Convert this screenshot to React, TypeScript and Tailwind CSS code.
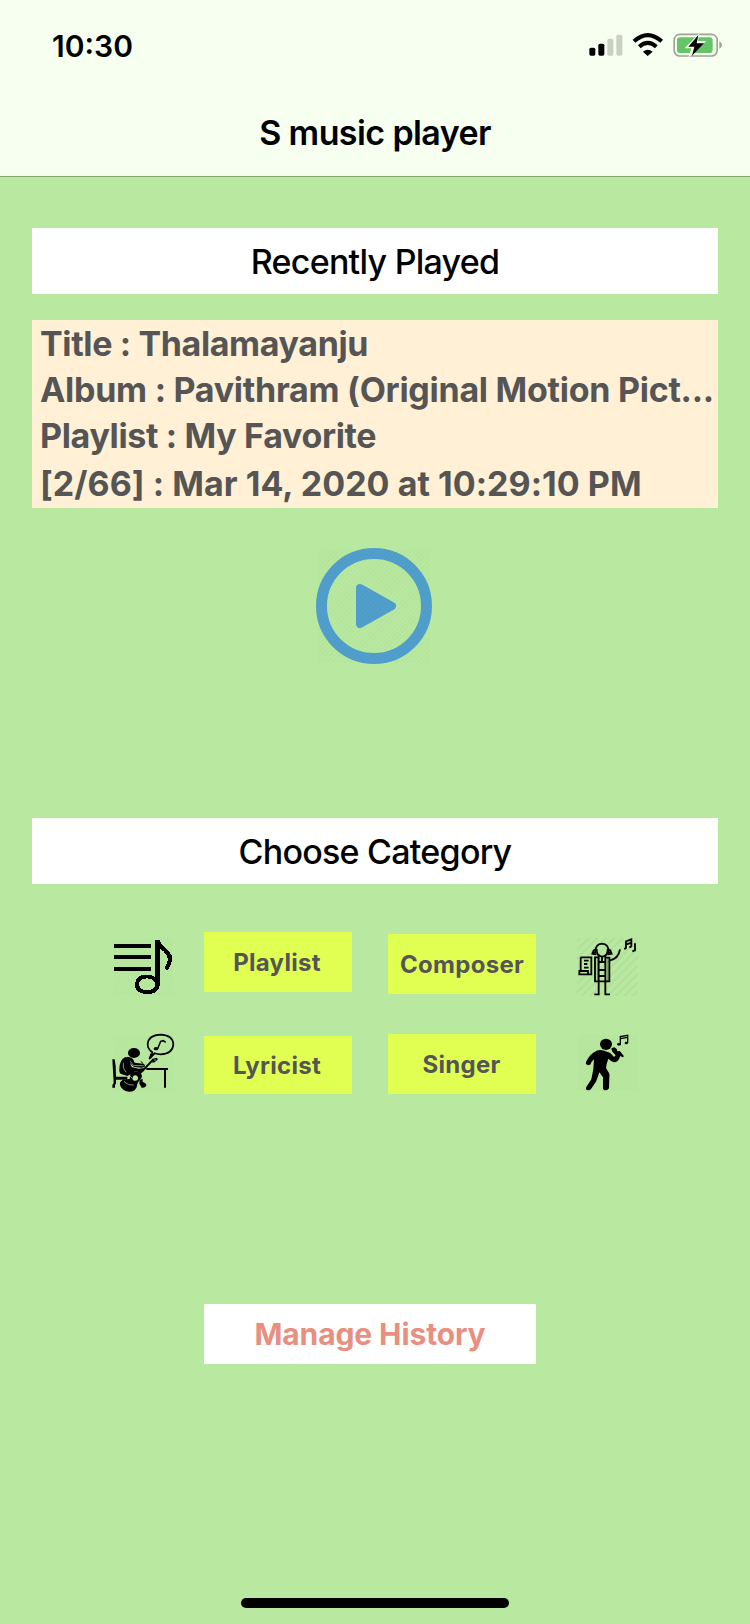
import type { ReactNode } from "react";

function Hatch({ id, size, x, y, w, h, opacity = 0.06 }: { id: string; size: number; x: number; y: number; w: number; h: number; opacity?: number }) {
  return (
    <>
      <defs>
        <pattern id={id} width={size} height={size} patternUnits="userSpaceOnUse" patternTransform="rotate(45)">
          <rect width={size * 0.35} height={size} fill="#000" />
        </pattern>
      </defs>
      <rect x={x} y={y} width={w} height={h} fill={`url(#${id})`} opacity={opacity} />
    </>
  );
}

function StatusIcons() {
  return (
    <svg width="134" height="24" viewBox="0 0 402 72" className="block">
      <rect x="1" y="44" width="18" height="24" rx="5" />
      <rect x="28" y="32" width="18" height="36" rx="5" />
      <rect x="55" y="17" width="18" height="51" rx="5" fill="#c9d1c1" />
      <rect x="82" y="5" width="18" height="63" rx="5" fill="#c9d1c1" />
      <path d="M135 25Q176 -12 218 25" fill="none" stroke="#000" strokeWidth="12" />
      <path d="M151 41Q176 18 202 41" fill="none" stroke="#000" strokeWidth="12" />
      <path d="M162 56Q176 44 191 56L176 69Z" />
      <rect x="255.500" y="4" width="129" height="65" rx="17" fill="none" stroke="#9da597" strokeWidth="5" />
      <path d="M391 25Q399 29 399 36T391 48Z" fill="#9da597" />
      <rect x="264" y="13" width="107" height="47" rx="10" fill="#65c466" />
      <path d="M331 0L287 46H307L298 74L352 24H327Z" fill="#f7fff0" />
      <path d="M328 6L298 41H316L309 68L345 31H323Z" />
    </svg>
  );
}

function PlayIcon() {
  return (
    <svg width="118" height="118" viewBox="0 0 118 118" className="block">
      <circle cx="59" cy="59" r="52.500" fill="none" stroke="#519fcd" strokeWidth="11" />
      <path d="M44 41L76 59L44 77Z" fill="#519fcd" stroke="#519fcd" strokeWidth="8" strokeLinejoin="round" transform="translate(1 0)" />
      <Hatch id="hatch-play" size={3.2} x={3} y={2} w={112} h={114} opacity={0.03} />
    </svg>
  );
}

function PlaylistIcon() {
  return (
    <svg width="62" height="60" viewBox="36 39 186 180" className="block" shapeRendering="crispEdges">
      <Hatch id="hatch-playlist" size={8} x={39} y={41} w={181} h={170} opacity={0.03} />
      <path d="M42 63H153M42 96H153M42 132H153" stroke="#000" strokeWidth="12" />
      <path d="M165 45H179Q184 60 203 75Q219 90 216 106Q213 124 201 137L193 129Q204 115 203 101Q202 86 179 70V178Q178 207 141 207Q105 206 105 178Q106 150 140 149Q155 149 165 156ZM141 160Q118 161 117 178Q118 195 141 196Q165 195 165 178Q164 161 141 160Z" fillRule="evenodd" />
    </svg>
  );
}

function LyricistIcon() {
  return (
    <svg width="63" height="60" viewBox="36 24 189 180" className="block">
      <Hatch id="hatch-lyricist" size={8} x={39} y={30} w={180} h={168} opacity={0.03} />
      <ellipse cx="102" cy="84" rx="18" ry="15" />
      <path d="M159 83Q143 74 143 58Q145 30 182 29Q219 31 220 58Q218 86 182 88Q172 88 164 85L148 102L154 87" fill="none" stroke="#000" strokeWidth="5" />
      <path d="M152 85L164 84L147 104Z" />
      <path d="M173 71L182 49L190 47L197 52" fill="none" stroke="#000" strokeWidth="4.500" />
      <ellipse cx="168" cy="71" rx="7" ry="5" />
      <path d="M37 103H44L47 123L48 155H82V164H48V178H45V188H37V180L41 174Z" />
      <path d="M75 97Q92 94 99 102L104 113L129 116Q137 118 134 125L126 128L102 126L89 113L96 127L117 131L132 129L130 138L105 139L83 153L63 147Q57 144 58 132Q59 104 75 97Z" />
      <path d="M70 113Q66 129 78 142M90 108L101 122L131 122" fill="none" stroke="#b9e9a0" strokeWidth="2" />
      <path d="M122 109L130 116" stroke="#000" strokeWidth="3" />
      <path d="M107 144L128 137L160 103M139 132H204M195 132V188" fill="none" stroke="#000" strokeWidth="6" />
      <path d="M158 101L170 98L174 103L164 112L157 113Z" />
      <circle cx="165" cy="105" r="2" fill="#b9e9a0" />
      <path d="M91 145Q105 135 117 142Q130 148 124 160Q118 166 113 174Q110 201 88 200Q68 199 61 183Q56 170 69 164L89 162Z" />
      <path d="M119 164L128 162L128 170Q140 175 139 182Q134 190 125 188L118 176Z" />
      <circle cx="106" cy="159" r="8" fill="#b9e9a0" />
      <path d="M72 169Q83 181 101 180M89 151L103 168" fill="none" stroke="#b9e9a0" strokeWidth="2" />
      <path d="M112 153L131 135" stroke="#000" strokeWidth="5" />
    </svg>
  );
}

function ComposerIcon() {
  return (
    <svg width="64" height="62" viewBox="18 18 192 186" className="block">
      <Hatch id="hatch-composer" size={18} x={21} y={24} w={182} h={174} opacity={0.04} />
      <g fill="none" stroke="#000" strokeWidth="5.500">
        <path d="M76 66Q76 42 96 41Q116 42 116 66M80 57Q79 78 96 80Q114 79 113 57M78 55Q70 60 67 71L79 73M114 55Q123 61 125 71L113 73" />
        <path d="M86 74V82H75V154H118V83H106V74M86 82V154M106 82V154M96 79V95M86 96H106M86 120H106M86 138H106" />
        <path d="M86 154V193H73M106 154V193H120M118 92Q146 86 150 58" />
        <path d="M32 82H64V133H28V123H54V133M32 82V123M42 92H56M42 102H52M42 113H56" />
        <path d="M168 56V34L184 28V50M168 44L184 38M162 56H168M178 51H184M195 40V61L187 64" />
      </g>
      <path d="M66 70H78V63ZM114 63V70H126Z" />
      <path d="M112 84V152M82 84V152" stroke="#000" strokeWidth="2" opacity=".55" />
    </svg>
  );
}

function SingerIcon() {
  return (
    <svg width="64" height="58" viewBox="18 27 192 174" className="block">
      <ellipse cx="108" cy="58" rx="18" ry="17" />
      <path d="M80 77Q90 73 103 77L121 84L132 96L137 91L126 79L124 70L133 67L140 72L142 79L149 78L155 85L162 94L158 97L151 93L147 102Q142 112 132 112Q125 111 115 101L110 117L108 129L117 144Q120 150 118 157L117 190Q112 198 102 195Q98 193 99 187L99 157L88 142Q83 158 78 170L63 192Q57 199 49 194Q46 191 49 186L64 163L70 132L72 103L64 112Q62 121 55 121Q46 119 48 111Q58 87 80 77Z" />
      <path d="M151 57V35L173 31V53M151 41L173 37" fill="none" stroke="#000" strokeWidth="4" />
      <ellipse cx="147" cy="58" rx="6" ry="4" />
      <ellipse cx="169" cy="54" rx="5" ry="4" />
      <Hatch id="hatch-singer" size={8} x={21} y={30} w={182} h={168} opacity={0.035} />
    </svg>
  );
}

function SectionTitle({ children }: { children: ReactNode }) {
  return <h2 className="flex h-[66px] items-center justify-center bg-white text-[34px] font-medium tracking-[-0.75px] text-black">{children}</h2>;
}

export default function App() {
  return (
    <div className="flex h-[1624px] w-[750px] flex-col overflow-hidden bg-[#b9e9a0] font-['Inter','Liberation_Sans',sans-serif] whitespace-nowrap text-[#555]">
      <header className="flex h-[177px] flex-col border-b border-[#82a572] bg-[#f7fff0] text-black">
        <div className="flex h-[90px] items-center justify-between pr-[27px] pl-[52px]">
          <span className="pt-[2px] text-[30px] font-semibold">10:30</span>
          <div><StatusIcons /></div>
        </div>
        <h1 className="flex h-[84px] items-center justify-center text-[34px] font-semibold tracking-[-0.6px]">S music player</h1>
      </header>

      <main className="flex flex-col px-8 pt-[51px]">
        <SectionTitle>Recently Played</SectionTitle>

        <section className="mt-[26px] flex h-[188px] flex-col bg-[#fff0d6] pt-px pl-2 text-[34px] leading-[46px] font-[680]">
          <p className="tracking-[-0.37px]">Title : Thalamayanju</p>
          <p className="tracking-[-0.27px]">Album : Pavithram (Original Motion Pict...</p>
          <p className="tracking-[-0.34px]">Playlist : My Favorite</p>
          <p className="mt-[2px] tracking-[0.04px]">[2/66] : Mar 14, 2020 at 10:29:10 PM</p>
        </section>

        <button aria-label="Play" className="mt-[39px] ml-[283px] w-[118px]"><PlayIcon /></button>

        <div className="mt-[153px]">
          <SectionTitle>Choose Category</SectionTitle>
        </div>

        <div className="mt-[48px] flex h-[62px] items-start pl-[80px] text-[24px] font-[680] tracking-[0.3px]">
          <div className="mt-[6px] w-[92px]"><PlaylistIcon /></div>
          <button className="h-[60px] w-[148px] bg-[#e1ff52] pt-[2px] pr-[2px]">Playlist</button>
          <button className="mt-[2px] ml-[36px] h-[60px] w-[148px] bg-[#e1ff52] pt-[2px]">Composer</button>
          <div className="mt-[4px] ml-[40px]"><ComposerIcon /></div>
        </div>
        <div className="mt-[40px] flex h-[60px] items-start pl-[80px] text-[24px] font-[680] tracking-[0.3px]">
          <div className="mt-[-1px] w-[92px]"><LyricistIcon /></div>
          <button className="mt-[2px] h-[58px] w-[148px] bg-[#e1ff52] pt-[2px] pr-[2px]">Lyricist</button>
          <button className="ml-[36px] h-[60px] w-[148px] bg-[#e1ff52] pt-[2px] pr-px">Singer</button>
          <div className="ml-[40px]"><SingerIcon /></div>
        </div>

        <button className="mt-[210px] ml-[172px] h-[60px] w-[332px] bg-white pt-px text-[30px] font-[680] tracking-[-0.1px] text-[#e78f81]">Manage History</button>
      </main>

      <div className="mt-auto mb-4 ml-[241px] h-[10px] w-[268px] rounded-full bg-black" />
    </div>
  );
}
